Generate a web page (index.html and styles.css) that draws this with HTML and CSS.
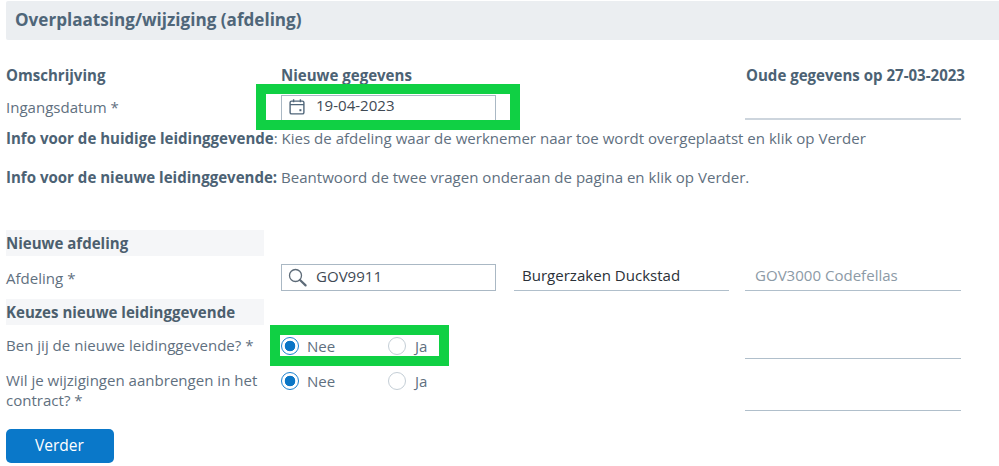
FILE: index.html
```html
<!DOCTYPE html>
<html lang="nl">
<head>
<meta charset="utf-8">
<title>Overplaatsing/wijziging (afdeling)</title>
<link rel="stylesheet" href="styles.css">
</head>
<body>
<main class="page">
  <h1 class="title">Overplaatsing/wijziging (afdeling)</h1>

  <div class="grid head-row">
    <div class="th">Omschrijving</div>
    <div class="th span2">Nieuwe gegevens</div>
    <div class="th th-old">Oude gegevens op 27-03-2023</div>
  </div>

  <div class="grid date-row">
    <div class="label">Ingangsdatum *</div>
    <div class="input">
      <svg class="ico" width="18" height="18" viewBox="0 0 18 18" fill="none" stroke="#50667a" stroke-width="1.4"><rect x="2.1" y="3.1" width="13.8" height="12.8" rx="1.5"/><path d="M2 6.6h14M5.6 1.3v3M12.4 1.3v3"/><rect x="11.4" y="11.2" width="2" height="2" fill="#50667a" stroke="none"/></svg>
      <span class="input-text">19-04-2023</span>
    </div>
    <div></div>
    <div class="old"></div>
  </div>

  <p class="info first"><b>Info voor de huidige leidinggevende</b>: <span class="info-text">Kies de afdeling waar de werknemer naar toe wordt overgeplaatst en klik op Verder</span></p>
  <p class="info second"><b>Info voor de nieuwe leidinggevende:</b> <span class="info-text">Beantwoord de twee vragen onderaan de pagina en klik op Verder.</span></p>

  <h2 class="section s1">Nieuwe afdeling</h2>

  <div class="grid dept-row">
    <div class="label">Afdeling *</div>
    <div class="input">
      <svg class="ico" width="20" height="20" viewBox="0 0 20 20" fill="none" stroke="#5d6b78"><circle cx="7.5" cy="7.5" r="6" stroke-width="1.3"/><path d="M12 12l5.6 5.4" stroke-width="2.2" stroke-linecap="round"/></svg>
      <span class="input-text">GOV9911</span>
    </div>
    <div class="value">Burgerzaken Duckstad</div>
    <div class="old muted">GOV3000 Codefellas</div>
  </div>

  <h2 class="section s2">Keuzes nieuwe leidinggevende</h2>

  <div class="grid q1">
    <div class="label">Ben jij de nieuwe leidinggevende? *</div>
    <div class="radios">
      <span class="radio on"></span><span class="opt">Nee</span>
      <span class="radio"></span><span class="opt">Ja</span>
    </div>
    <div></div>
    <div class="old"></div>
  </div>

  <div class="grid q2">
    <div class="label">Wil je wijzigingen aanbrengen in het contract? *</div>
    <div class="radios">
      <span class="radio on"></span><span class="opt">Nee</span>
      <span class="radio"></span><span class="opt">Ja</span>
    </div>
    <div></div>
    <div class="old"></div>
  </div>

  <button class="btn" type="button">Verder</button>
</main>
<div class="mark mark-date"></div>
<div class="mark mark-radio"></div>
</body>
</html>
```

FILE: styles.css
```css
* { box-sizing: border-box; }
html, body { margin: 0; padding: 0; background: #fff; }
body {
  width: 999px;
  height: 466px;
  overflow: hidden;
  position: relative;
  font-family: "Open Sans", sans-serif;
  font-size: 15.05px;
  line-height: 20px;
  color: #5f7080;
}
.page { padding: 1px 0 0 6px; }
.title {
  margin: 0;
  height: 39px;
  padding-left: 9px;
  background: #ebeef1;
  border-radius: 2px 0 0 2px;
  font-size: 17.1px;
  font-weight: 700;
  line-height: 38px;
  color: #4f6679;
}
.grid {
  display: grid;
  grid-template-columns: 258px 215px 215px 216px;
  column-gap: 17px;
}
.head-row { margin-top: 25px; height: 20px; }
.th { font-weight: 700; color: #4c6274; white-space: nowrap; }
.th-old { padding-left: 1px; }
.span2 { grid-column: span 2; }
.date-row { margin-top: 10px; height: 26px; align-items: start; }
.label { padding-top: 2px; }
.dept-row .label { padding-top: 4px; }
.input {
  display: flex;
  align-items: center;
  height: 27px;
  border: 1px solid #aab8c4;
  color: #3f4a54;
  padding-left: 6px;
}
.date-row .input { padding-bottom: 3px; }
.ico { flex: none; }
.date-row .ico { margin-right: 10px; }
.dept-row .ico { margin-right: 8px; }
.date-row .input-text { margin-bottom: 4px; }
.dept-row .input-text { margin-bottom: 3px; }
.old { border-bottom: 2px solid #cdd5dd; height: 25px; }
.info { margin: 0; white-space: nowrap; }
.info b { color: #4c6274; }
.first { margin-top: 7px; }
.second { margin-top: 19px; }
.section {
  margin: 0;
  width: 258px;
  height: 26px;
  background: #f5f6f8;
  font-size: 15.05px;
  font-weight: 700;
  line-height: 26px;
  color: #4c5f6e;
}
.s1 { margin-top: 43px; }
.dept-row { margin-top: 8px; margin-bottom: 8px; height: 27px; }
.value {
  height: 27px;
  margin: 0 -1px 0 1px;
  padding: 1px 0 0 8px;
  color: #2b3138;
  border-bottom: 1px solid #b0bfcb;
}
.dept-row .old {
  height: 27px;
  padding: 1px 0 0 10px;
  color: #8c9aa6;
  border-bottom: 1px solid #b0bfcb;
}
.radios {
  display: flex;
  align-items: center;
  height: 20px;
}
.radio {
  flex: none;
  width: 18px;
  height: 18px;
  border: 1px solid #c4ced6;
  border-radius: 50%;
  margin-right: 8px;
  background: #fff;
}
.radio.on {
  border-color: #1c82cf;
  background: radial-gradient(circle, #0b76c6 0 5px, #fff 5.6px);
}
.opt { width: 81px; }
.opt + .radio + .opt { margin-left: 1px; }
.q1 { margin-top: 11px; height: 35px; }
.q2 { height: 52px; }
.q1 .label { padding-top: 0; line-height: 18px; }
.q2 .label { padding-top: 0; line-height: 19.5px; }
.q1 .old { height: 23px; border-bottom: 1px solid #b0bfcb; }
.q2 .old { height: 40px; border-bottom: 1px solid #b0bfcb; }
.btn {
  display: block;
  width: 108px;
  height: 34px;
  margin-top: 6px;
  padding: 0 1px 2px 0;
  border: 0;
  border-radius: 5px;
  background: #0a78c9;
  color: #fff;
  font: 400 15.5px/32px "Open Sans", sans-serif;
}
.mark {
  position: absolute;
  border: 10px solid #10d044;
  pointer-events: none;
}
.mark-date { left: 256px; top: 84px; width: 264px; height: 46px; }
.mark-radio { left: 270px; top: 325px; width: 179px; height: 41px; }
```
